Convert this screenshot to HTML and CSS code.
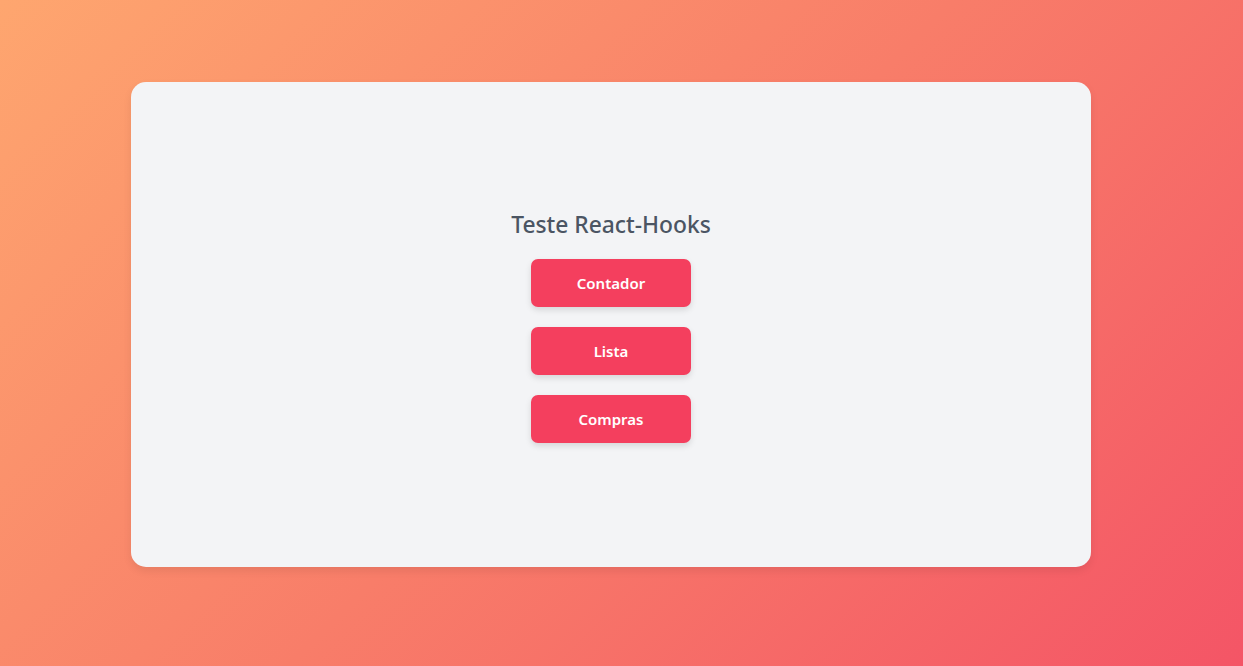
FILE: index.html
```html
<!DOCTYPE html>
<html lang="pt">
<head>
<meta charset="utf-8">
<title>Teste React-Hooks</title>
<link rel="stylesheet" href="styles.css">
</head>
<body>
<main class="page">
  <section class="card">
    <h1 class="title">Teste React-Hooks</h1>
    <button class="btn">Contador</button>
    <button class="btn">Lista</button>
    <button class="btn">Compras</button>
  </section>
</main>
</body>
</html>
```
FILE: styles.css
```css
* { box-sizing: border-box; }
html, body { margin: 0; height: 100%; }
body {
  font-family: "Noto Sans", "Open Sans", sans-serif;
  background: linear-gradient(135deg, #fea66f 0%, #f87d69 50%, #f45566 100%);
  overflow: hidden;
}
.page {
  padding: 82px 152px 0 131px;
}
.card {
  height: 485px;
  background: #f3f4f6;
  border-radius: 15px;
  box-shadow: 0 4px 8px rgba(0,0,0,0.08);
  display: flex;
  flex-direction: column;
  align-items: center;
  justify-content: center;
  gap: 20px;
  padding-top: 4px;
}
.title {
  margin: 0;
  font-size: 22.8px;
  line-height: 28px;
  font-weight: 500;
  color: #4b5563;
}
.btn {
  width: 160px;
  height: 48px;
  border: none;
  border-radius: 7px;
  background: #f43f5e;
  color: #fff;
  font-family: inherit;
  font-size: 15px;
  font-weight: 600;
  box-shadow: 0 3px 6px rgba(0,0,0,0.12);
  cursor: pointer;
}
```
